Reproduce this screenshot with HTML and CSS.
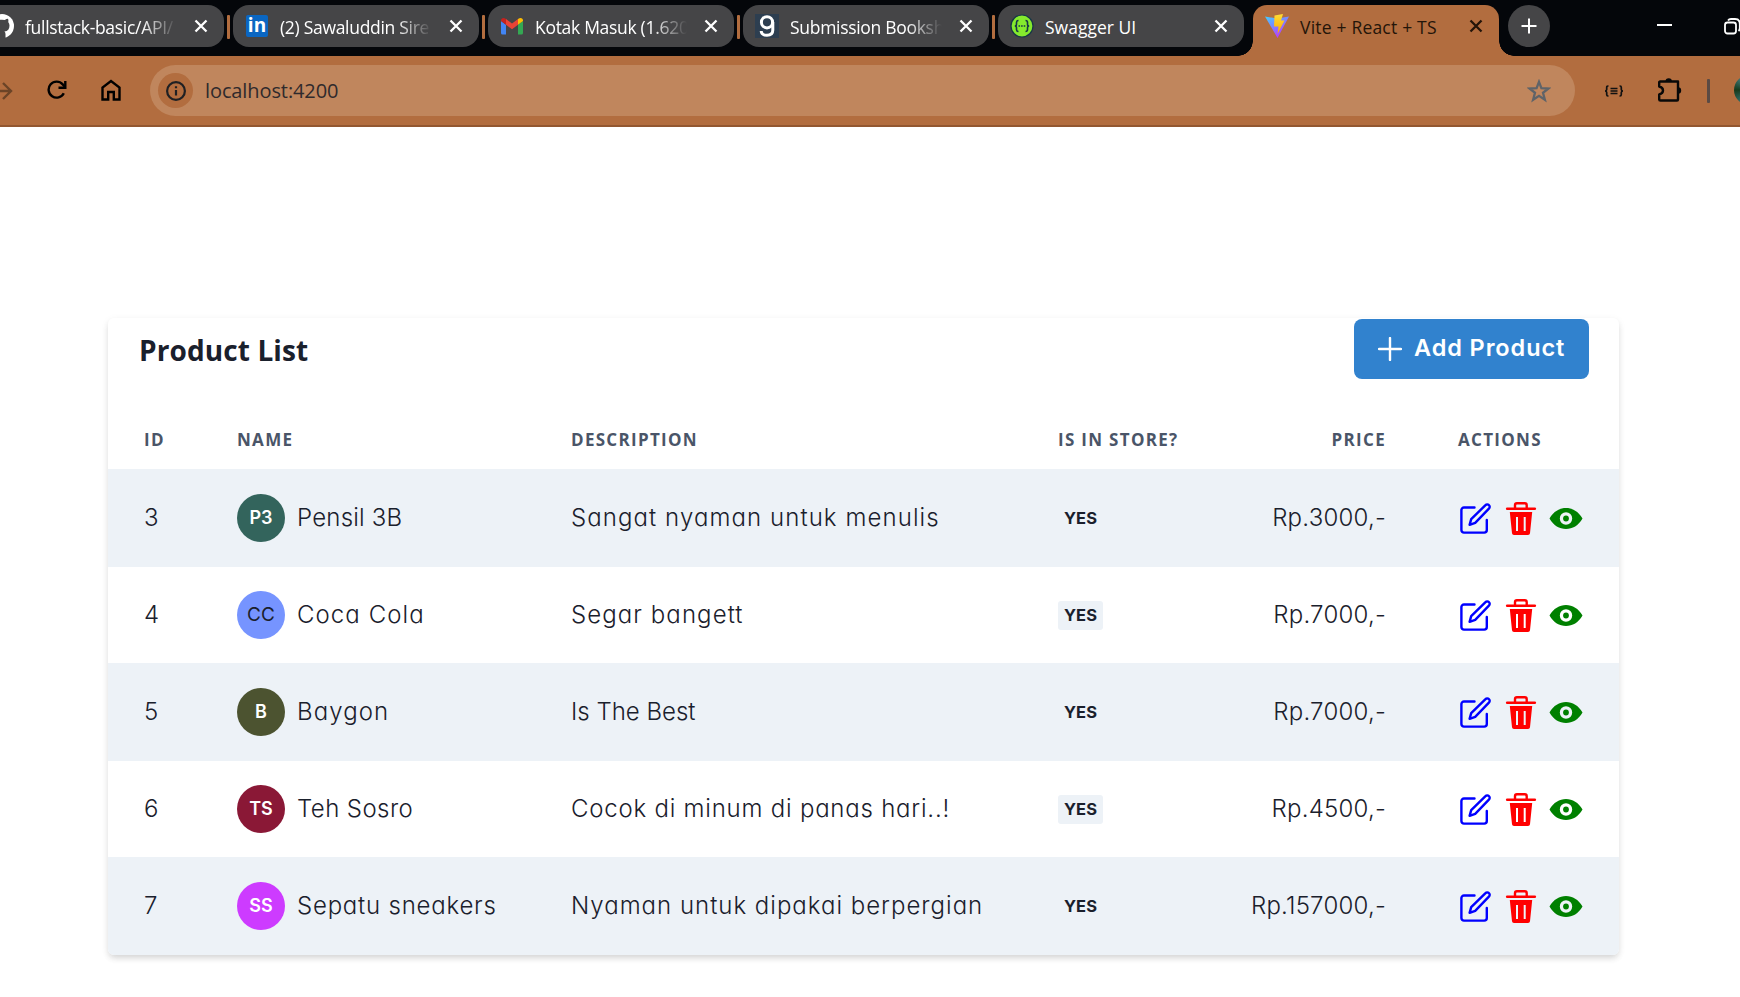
FILE: index.html
```html
<!DOCTYPE html>
<html lang="en">
<head>
<meta charset="utf-8">
<title>Vite + React + TS</title>
<link rel="stylesheet" href="styles.css">
</head>
<body>
<svg class="sprite" width="0" height="0" aria-hidden="true">
  <symbol id="close" viewBox="0 0 14 14"><path d="M1.500 1.500l11 11M12.500 1.500l-11 11" fill="none" stroke="currentColor" stroke-width="2.300"/></symbol>
  <symbol id="edit" viewBox="0 0 36 36"><g fill="none" stroke="currentColor" stroke-width="2.400" stroke-linecap="round" stroke-linejoin="round"><path d="M16.500 7.500H6a2.600 2.600 0 0 0-2.600 2.600V30A2.600 2.600 0 0 0 6 32.600H26.200A2.600 2.600 0 0 0 28.800 30V20"/><path d="M11.600 24.800L13.200 19.200 27.500 5.100A2.300 2.300 0 0 1 30.900 5.100 2.300 2.300 0 0 1 30.900 8.600L17.200 22.800Z"/></g></symbol>
  <symbol id="trash" viewBox="0 0 36 36"><path d="M4.200 8.700H31.800" stroke="currentColor" stroke-width="2.600" stroke-linecap="round"/><path d="M12 8V5.200A1.900 1.900 0 0 1 13.900 3.300H21.800A1.900 1.900 0 0 1 23.700 5.200V8" fill="none" stroke="currentColor" stroke-width="2.400"/><path fill-rule="evenodd" fill="currentColor" d="M6.800 12H29.200L27 33.200Q26.800 35 25 35H11Q9.200 35 9 33.200ZM13 17V31H15V17ZM20.700 17V31H22.700V17Z"/></symbol>
  <symbol id="eye" viewBox="0 0 36 36"><path fill-rule="evenodd" fill="currentColor" d="M1.500 18.500C5.500 11.500 11.500 8 18 8S30.500 11.500 34.500 18.500C30.500 25.500 24.500 29 18 29S5.500 25.500 1.500 18.500ZM18 12.300a6.200 6.200 0 1 0 0 12.400a6.200 6.200 0 1 0 0-12.400Z"/><circle cx="18" cy="18.500" r="2.900" fill="currentColor"/></symbol>
</svg>

<header class="browser">
  <div class="tabstrip">
    <div class="tab tab-first">
      <svg class="fav fav-github" viewBox="0 0 24 24"><circle cx="12" cy="12" r="12" fill="#fff"/><path fill="#454547" d="M8.500 24V20.500C5 21 4.500 19 3.500 18C6 18.500 6.500 20 8.600 19.300Q8.800 18.200 9.600 17.600C6 17 4.500 15 4.500 11.500Q4.500 9.500 5.800 8Q5.300 6.500 6 4.700Q7.500 4.700 9.200 6Q12 5.300 14.800 6Q16.500 4.700 18 4.700Q18.700 6.500 18.200 8Q19.500 9.500 19.500 11.500C19.500 15 18 17 14.400 17.600Q15.500 18.500 15.500 20V24Z"/></svg>
      <span class="tab-title fade">fullstack-basic/API/</span><svg class="close"><use href="#close"/></svg>
    </div>
    <i class="sep"></i>
    <div class="tab">
      <span class="fav fav-in">in</span>
      <span class="tab-title fade">(2) Sawaluddin Sire</span><svg class="close"><use href="#close"/></svg>
    </div>
    <i class="sep"></i>
    <div class="tab">
      <svg class="fav" viewBox="0 0 24 24"><path fill="#4285f4" d="M1 7l5 3.700V20.500H2.500Q1 20.500 1 19Z"/><path fill="#34a853" d="M23 7l-5 3.700V20.500H21.500Q23 20.500 23 19Z"/><path fill="#ea4335" d="M6 5l6 4.600L18 5V10.700L12 15.200 6 10.700Z"/><path fill="#c5221f" d="M1 6.500C1 4 3.500 3 6 5V10.700L1 7Z"/><path fill="#fbbc04" d="M23 6.500C23 4 20.500 3 18 5V10.700L23 7Z"/></svg>
      <span class="tab-title fade">Kotak Masuk (1.620</span><svg class="close"><use href="#close"/></svg>
    </div>
    <i class="sep"></i>
    <div class="tab">
      <svg class="fav" viewBox="0 0 24 24"><rect width="24" height="24" fill="#2d3e50"/><g fill="none" stroke="#fff" stroke-width="3"><circle cx="12" cy="8.300" r="5.600"/><path d="M17.800 8V16Q17.800 21.300 12 21.300Q6.500 21.300 6.200 17"/></g></svg>
      <span class="tab-title fade">Submission Booksh</span><svg class="close"><use href="#close"/></svg>
    </div>
    <i class="sep"></i>
    <div class="tab">
      <svg class="fav" viewBox="0 0 24 24"><circle cx="12" cy="12" r="11" fill="#85ea2d" stroke="#173647" stroke-width="1.200"/><g fill="none" stroke="#173647" stroke-width="1.600"><path d="M8.500 6.500Q6.500 6.500 6.500 8.500V10.200Q6.500 12 4.800 12Q6.500 12 6.500 13.800V15.500Q6.500 17.500 8.500 17.500M15.500 6.500Q17.500 6.500 17.500 8.500V10.200Q17.500 12 19.200 12Q17.500 12 17.500 13.800V15.500Q17.500 17.500 15.500 17.500"/><path d="M8.500 12H16" stroke-dasharray="1.600 1"/></g></svg>
      <span class="tab-title t5">Swagger UI</span><svg class="close"><use href="#close"/></svg>
    </div>
    <div class="tab tab-active">
      <svg class="fav" viewBox="0 0 24 24"><defs><linearGradient id="va" x1="0" y1="0" x2=".6" y2="1"><stop offset="0" stop-color="#41d1ff"/><stop offset="1" stop-color="#bd34fe"/></linearGradient><linearGradient id="vb" x1="0" y1="0" x2="0" y2="1"><stop offset="0" stop-color="#ffdd35"/><stop offset="1" stop-color="#ffa800"/></linearGradient></defs><path fill="url(#va)" d="M0 2.500L12 4.500 24 2.500 12.500 24Z"/><path fill="url(#vb)" d="M9.500 1.500L18 0 16 6.500H19.500L12.500 20 13.500 12.500H9Z"/></svg>
      <span class="tab-title t6">Vite + React + TS</span><svg class="close"><use href="#close"/></svg>
    </div>
    <div class="newtab"><svg viewBox="0 0 16 16"><path d="M8 .5V15.500M.5 8H15.500" stroke="#fff" stroke-width="2"/></svg></div>
    <div class="winctl">
      <svg class="min" viewBox="0 0 15 2"><path d="M0 1H15" stroke="#fff" stroke-width="2"/></svg>
      <svg class="max" viewBox="0 0 17 17"><g fill="none" stroke="#fff" stroke-width="1.800"><rect x="1" y="4.500" width="11" height="11" rx="2.500"/><path d="M4 2.500Q5 1 7 1H11Q15.800 1 15.800 6V10Q15.800 12 14.500 13"/></g></svg>
    </div>
  </div>
  <div class="toolbar">
    <svg class="fwd" viewBox="0 0 18 20"><path d="M0 10H15.500M8 2l8 8-8 8" fill="none" stroke="#6b4427" stroke-width="2.400"/></svg>
    <svg class="reload" viewBox="0 0 20 20"><g fill="none" stroke="#000" stroke-width="2.400"><path d="M16.800 13.200A8 8 0 1 1 15.700 4.400L18 7"/><path d="M18.300 1V7.700H11.500"/></g></svg>
    <svg class="home" viewBox="0 0 20 22"><path d="M1.500 20.500V8.500L10 2 18.500 8.500V20.500H12.800V13H7.200V20.500Z" fill="none" stroke="#000" stroke-width="2.400"/></svg>
    <div class="omnibox">
      <span class="info"><svg viewBox="0 0 20 20"><circle cx="10" cy="10" r="8.900" fill="none" stroke="#1f2023" stroke-width="2.200"/><path d="M10 9V14.500M10 5.200V7.300" stroke="#1f2023" stroke-width="2.200"/></svg></span>
      <span class="url">localhost:4200</span>
      <svg class="star" viewBox="0 0 24 24"><path d="M12 2.800L14.400 9.100 21.500 9.500 16 13.800 17.900 20.800 12 16.900 6.100 20.800 8 13.800 2.500 9.500 9.600 9.100Z" fill="none" stroke="#5f6368" stroke-width="2.300"/></svg>
    </div>
    <svg class="braces" viewBox="0 0 20 12"><g fill="none" stroke="#111" stroke-width="1.700"><path d="M4.500 1H4Q2.700 1 2.700 2.500V4.500Q2.700 6 1 6Q2.700 6 2.700 7.500V9.500Q2.700 11 4 11H4.500M15.500 1H16Q17.300 1 17.300 2.500V4.500Q17.300 6 19 6Q17.300 6 17.300 7.500V9.500Q17.300 11 16 11H15.500"/><path d="M6.500 3.500H13.500M6.500 6H13.500M6.500 8.500H13.500" stroke-width="1.300"/></g></svg>
    <svg class="puzzle" viewBox="0 0 26 26"><path d="M3 4.500H21V22.500Q21 23.500 20 23.500H3.500Q2.200 23.500 2.200 22.500V17.500Q6 16.500 6 13.500T2.200 9.500V5Z" fill="none" stroke="#080808" stroke-width="2.400" stroke-linejoin="round"/><path d="M8.500 4.500a3.200 3.200 0 0 1 6.400 0ZM21 10.300a3.200 3.200 0 0 1 0 6.400Z" fill="#080808"/></svg>
    <i class="divider"></i>
    <i class="profile"></i>
  </div>
</header>

<main class="card">
  <div class="card-head">
    <h1 class="title">Product List</h1>
    <button class="add"><svg viewBox="0 0 24 24"><path d="M12 1V23M1 12H23" stroke="#fff" stroke-width="2.400" stroke-linecap="round"/></svg><span>Add Product</span></button>
  </div>
  <div class="row head"><span>ID</span><span>NAME</span><span>DESCRIPTION</span><span>IS IN STORE?</span><span class="right">PRICE</span><span>ACTIONS</span></div>
  <div class="row odd"><span class="txt">3</span><span class="name"><b class="avatar av-teal">P3</b><span class="txt snug">Pensil 3B</span></span><span class="txt wide">Sangat nyaman untuk menulis</span><span><b class="badge">YES</b></span><span class="right txt snug">Rp.3000,-</span><span class="acts"><svg class="edit"><use href="#edit"/></svg><svg class="trash"><use href="#trash"/></svg><svg class="eye"><use href="#eye"/></svg></span></div>
  <div class="row"><span class="txt">4</span><span class="name"><b class="avatar av-blue">CC</b><span class="txt wide">Coca Cola</span></span><span class="txt wide">Segar bangett</span><span><b class="badge">YES</b></span><span class="right txt snug">Rp.7000,-</span><span class="acts"><svg class="edit"><use href="#edit"/></svg><svg class="trash"><use href="#trash"/></svg><svg class="eye"><use href="#eye"/></svg></span></div>
  <div class="row odd"><span class="txt">5</span><span class="name"><b class="avatar av-olive">B</b><span class="txt wide">Baygon</span></span><span class="txt">Is The Best</span><span><b class="badge">YES</b></span><span class="right txt snug">Rp.7000,-</span><span class="acts"><svg class="edit"><use href="#edit"/></svg><svg class="trash"><use href="#trash"/></svg><svg class="eye"><use href="#eye"/></svg></span></div>
  <div class="row"><span class="txt">6</span><span class="name"><b class="avatar av-wine">TS</b><span class="txt snug2">Teh Sosro</span></span><span class="txt mid">Cocok di minum di panas hari..!</span><span><b class="badge">YES</b></span><span class="right txt snug">Rp.4500,-</span><span class="acts"><svg class="edit"><use href="#edit"/></svg><svg class="trash"><use href="#trash"/></svg><svg class="eye"><use href="#eye"/></svg></span></div>
  <div class="row odd last"><span class="txt">7</span><span class="name"><b class="avatar av-pink">SS</b><span class="txt mid">Sepatu sneakers</span></span><span class="txt wide2">Nyaman untuk dipakai berpergian</span><span><b class="badge">YES</b></span><span class="right txt snug">Rp.157000,-</span><span class="acts"><svg class="edit"><use href="#edit"/></svg><svg class="trash"><use href="#trash"/></svg><svg class="eye"><use href="#eye"/></svg></span></div>
</main>
</body>
</html>
```

FILE: styles.css
```css
* { box-sizing: border-box; }
body { margin: 0; width: 1740px; height: 997px; overflow: hidden; background: #fff; color: #1a202c; font-family: Inter, sans-serif; }
svg { display: block; flex: none; }
.sprite { position: absolute; }

/* browser chrome */
.browser { font-family: "Open Sans", "Noto Sans", sans-serif; overflow: hidden; }
.tabstrip { height: 56px; padding-top: 5px; background: #04060a; display: flex; align-items: flex-start; overflow: hidden; }
.tab { flex: none; width: 246px; height: 42px; border-radius: 16px; background: #454547; color: #fff; display: flex; align-items: center; padding: 0 18px 0 12px; }
.tab-first { margin-left: -22px; }
.sep { flex: none; width: 3px; height: 24px; margin: 10px 3px 0; border-radius: 1px; background: #b26d3f; }
.tab-active { position: relative; height: 51px; margin-left: 9px; padding-bottom: 9px; background: #b26d3f; color: #241509; border-radius: 14px 14px 0 0; }
.tab-active::before, .tab-active::after { content: ""; position: absolute; bottom: 0; width: 15px; height: 15px; }
.tab-active::before { right: 100%; background: radial-gradient(circle at 0 0, transparent 14.500px, #b26d3f 15px); }
.tab-active::after { left: 100%; background: radial-gradient(circle at 100% 0, transparent 14.500px, #b26d3f 15px); }
.fav { flex: none; width: 24px; height: 24px; margin-right: 11px; }
.fav-in { width: 22px; height: 22px; margin: 0 12px 0 1px; border-radius: 2px; background: #0a66c2; color: #fff; font-weight: 700; font-size: 19px; line-height: 20px; text-align: center; }
.tab-title { flex: none; width: 155px; margin-right: 14px; padding-top: 2px; white-space: nowrap; font-size: 17.500px; line-height: 28px; letter-spacing: -.3px; }
.t5 { letter-spacing: 0; }
.t6 { letter-spacing: .2px; }
.fade { -webkit-mask-image: linear-gradient(90deg, #000 75%, transparent 98%); mask-image: linear-gradient(90deg, #000 75%, transparent 98%); }
.close { width: 14px; height: 14px; }
.newtab { flex: none; width: 42px; height: 42px; margin-left: 9px; border-radius: 50%; background: #454547; display: flex; align-items: center; justify-content: center; }
.newtab svg { width: 16px; height: 16px; }
.winctl { flex: none; display: flex; padding: 13px 0 0 107px; }
.min { width: 15px; height: 2px; margin-top: 6px; }
.max { width: 17px; height: 17px; margin-left: 52px; }
.toolbar { height: 71px; padding: 9px 0 0; background: #b26d3f; border-bottom: 2px solid #925731; display: flex; align-items: flex-start; }
.toolbar > svg, .toolbar > i { flex: none; }
.fwd { width: 18px; height: 20px; margin: 16px 0 0 -5px; }
.reload { width: 20px; height: 20px; margin: 15px 0 0 34px; }
.home { width: 20px; height: 22px; margin: 14px 0 0 34px; }
.omnibox { flex: none; width: 1425px; height: 51px; margin-left: 29px; border-radius: 26px; background: #c0865d; display: flex; align-items: center; padding: 0 24px 0 8px; }
.info { width: 35px; height: 35px; border-radius: 50%; background: #b26d3f; display: flex; align-items: center; justify-content: center; }
.info svg { width: 20px; height: 20px; }
.url { flex: 1; margin-left: 12px; font-size: 20px; color: #2f2a2c; letter-spacing: -.1px; }
.star { width: 24px; height: 24px; }
.braces { width: 20px; height: 12px; margin: 20px 0 0 29px; }
.puzzle { width: 26px; height: 26px; margin: 12px 0 0 33px; }
.divider { width: 3px; height: 24px; margin: 14px 0 0 24px; background: #5a4a44; border-radius: 1px; }
.profile { width: 30px; height: 30px; margin: 10px -30px 0 24px; border-radius: 50%; background: conic-gradient(#24584a, #3a6d50, #3f8e9c, #163a1c, #5aa0b0); }

/* product card */
.card { width: 1511px; height: 637px; margin: 191px 0 0 108px; border-radius: 6px; background: #fff; box-shadow: 0 4px 6px -1px rgba(0,0,0,.13), 0 2px 9px rgba(0,0,0,.06); }
.card-head { display: flex; justify-content: space-between; height: 91px; padding: 1px 30px 0 31px; }
.title { margin: 9px 0 0; font: 700 28px/44px "Open Sans", "Noto Sans", sans-serif; letter-spacing: .1px; }
.add { width: 235px; height: 60px; padding: 0 24px; border: 0; border-radius: 8px; background: #3182ce; color: #fff; display: flex; align-items: center; gap: 12px; font: 600 23.500px/36px Inter, sans-serif; letter-spacing: .9px; white-space: nowrap; }
.add span { padding-bottom: 2px; }
.add svg { width: 24px; height: 24px; }
.row { display: grid; grid-template-columns: 93px 334px 487px 200px 200px 161px; align-items: center; height: 96px; padding-left: 36px; font-size: 24px; font-weight: 300; white-space: nowrap; font-feature-settings: "cv11"; }
.odd { height: 98px; background: #edf2f7; }
.last { border-radius: 0 0 6px 6px; }
.head { height: 60px; padding-top: 1px; font: 700 17px/24px "Open Sans", "Noto Sans", sans-serif; letter-spacing: 1.300px; color: #4a5568; }
.txt { padding-bottom: 2px; }
.snug { letter-spacing: .22px; }
.snug2 { letter-spacing: .42px; }
.mid { letter-spacing: .78px; }
.wide { letter-spacing: 1.080px; }
.wide2 { letter-spacing: 1px; }
.right { justify-self: end; margin-right: 72px; }
.name { display: flex; align-items: center; gap: 12px; }
.avatar { width: 48px; height: 48px; border-radius: 50%; color: #fff; display: flex; align-items: center; justify-content: center; font-size: 18px; font-weight: 600; padding-bottom: 1px; }
.av-teal { background: #33645c; }
.av-blue { background: #7694ff; color: #1a202c; font-weight: 400; font-size: 19px; }
.av-olive { background: #4c5330; }
.av-wine { background: #8a1836; }
.av-pink { background: #cd3bff; }
.badge { display: flex; align-items: center; justify-content: center; width: 45px; height: 29px; border-radius: 3px; background: #edf2f7; font-size: 16.500px; font-weight: 700; }
.acts { display: flex; align-items: center; }
.acts svg { width: 36px; height: 36px; }
.edit { color: #00f; }
.trash { color: red; margin-left: 9px; }
.eye { color: green; margin-left: 9px; }
```
